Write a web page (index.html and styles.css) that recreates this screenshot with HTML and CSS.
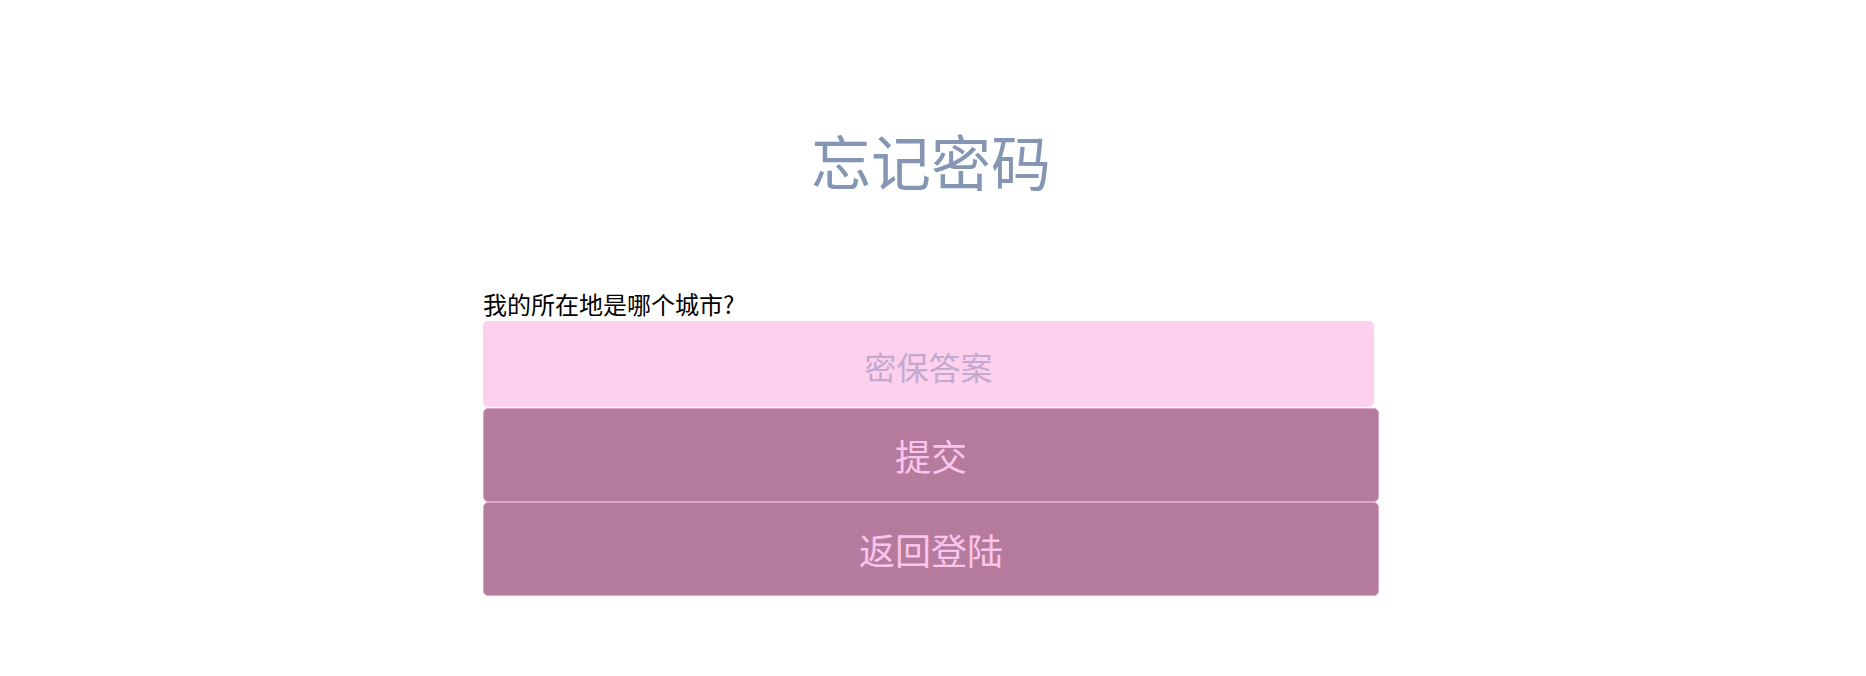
FILE: index.html
```html
<!DOCTYPE html>
<html lang="zh-CN">
<head>
<meta charset="utf-8">
<title>忘记密码</title>
<link rel="stylesheet" href="styles.css">
</head>
<body>
<div class="page">
  <h1 class="title">忘记密码</h1>
  <form class="form">
    <label class="question" for="answer">我的所在地是哪个城市?</label>
    <input class="answer" id="answer" type="text" placeholder="密保答案">
    <button class="btn" type="button">提交</button>
    <button class="btn" type="button">返回登陆</button>
  </form>
</div>
</body>
</html>
```

FILE: styles.css
```css
html, body {
  margin: 0;
  padding: 0;
  background: #ffffff;
}

body {
  font-family: "Noto Sans CJK SC", "Noto Sans", sans-serif;
  color: #000000;
}

.page {
  width: 900px;
  box-sizing: border-box;
  padding-right: 4px;
  margin: 0 auto;
}

.title {
  margin: 120px 0 0 0;
  height: 80px;
  line-height: 80px;
  font-size: 60px;
  font-weight: normal;
  color: #8496b4;
  text-align: center;
  letter-spacing: 0;
}

.form {
  margin: 90px 0 0 0;
  display: flex;
  flex-direction: column;
  align-items: flex-start;
}

.question {
  display: block;
  font-size: 24px;
  line-height: 28px;
  height: 28px;
  margin-bottom: 3px;
}

.answer {
  display: block;
  box-sizing: border-box;
  width: 891px;
  height: 86px;
  margin: 0 0 1px 0;
  padding: 3px 0 0 0;
  border: none;
  border-radius: 5px;
  background: #fdd0ee;
  font-family: "Noto Sans CJK SC", "Noto Sans", sans-serif;
  font-size: 32px;
  text-align: center;
  color: #6a5070;
  outline: none;
}

.answer::placeholder {
  color: #c3a9cf;
  opacity: 1;
}

.btn {
  display: block;
  box-sizing: border-box;
  width: 896px;
  height: 94px;
  margin: 0;
  padding: 0;
  border: 1px solid #dba7ca;
  border-radius: 5px;
  background: #b47b9c;
  color: #fbc4ec;
  font-family: "Noto Sans CJK SC", "Noto Sans", sans-serif;
  font-size: 36px;
  cursor: pointer;
}
```
